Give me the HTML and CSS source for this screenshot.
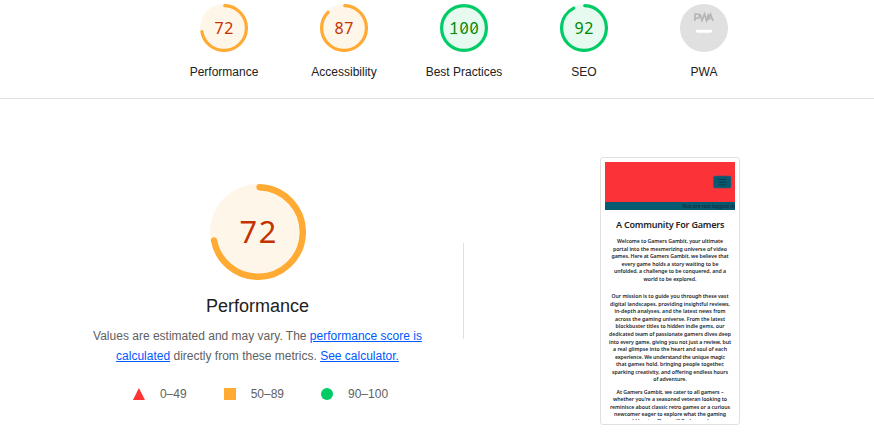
FILE: index.html
```
<!DOCTYPE html>
<html lang="en">
<head>
<meta charset="utf-8">
<title>Performance report</title>
<link rel="stylesheet" href="styles.css">
</head>
<body>
<header class="scores">
  <a class="score average"><svg class="gauge" viewBox="0 0 120 120"><circle class="base" cx="60" cy="60" r="60"/><circle class="arc" cx="60" cy="60" r="56" pathLength="360" stroke-dasharray="257 360" transform="rotate(-88 60 60)"/><text x="60" y="75.500" textLength="47">72</text></svg><span>Performance</span></a>
  <a class="score average"><svg class="gauge" viewBox="0 0 120 120"><circle class="base" cx="60" cy="60" r="60"/><circle class="arc" cx="60" cy="60" r="56" pathLength="360" stroke-dasharray="311 360" transform="rotate(-88 60 60)"/><text x="60" y="75.500" textLength="47">87</text></svg><span>Accessibility</span></a>
  <a class="score pass"><svg class="gauge" viewBox="0 0 120 120"><circle class="base" cx="60" cy="60" r="60"/><circle class="arc" cx="60" cy="60" r="56"/><text x="60" y="75.500" textLength="73">100</text><path class="strokes" d="M26 74H43M54 70L67 52M79 70L92 52"/></svg><span>Best Practices</span></a>
  <a class="score pass"><svg class="gauge" viewBox="0 0 120 120"><circle class="base" cx="60" cy="60" r="60"/><circle class="arc" cx="60" cy="60" r="56" pathLength="360" stroke-dasharray="329 360" transform="rotate(-88 60 60)"/><text x="60" y="75.500" textLength="47">92</text></svg><span>SEO</span></a>
  <a class="score"><svg class="gauge" viewBox="0 0 48 48"><circle cx="24" cy="24" r="24" fill="#e0e0e0"/><path d="M15 17V10H17.500Q19.500 10 19.500 12T17.500 14.300H15M20 10L22 16.500L24.500 10L26.500 16.500L28.500 10M27.500 16.500L30.500 10L33 17M28.800 14.500H32" fill="none" stroke="#b5b5b5" stroke-width="1.600"/><rect x="16" y="25.700" width="16" height="3" rx="1.400" fill="#fff"/></svg><span>PWA</span></a>
</header>
<main class="category">
  <section class="summary">
    <svg class="gauge large average" viewBox="0 0 120 120"><circle class="base" cx="60" cy="60" r="60"/><circle class="arc" cx="60" cy="60" r="56" pathLength="360" stroke-dasharray="257 360" transform="rotate(-88 60 60)"/><text x="60" y="74" textLength="46">72</text></svg>
    <h1>Performance</h1>
    <p class="description">Values are estimated and may vary. The <a>performance score is<br>calculated</a> directly from these metrics. <a>See calculator.</a></p>
    <div class="scale">
      <span class="range"><i class="triangle"></i>0–49</span>
      <span class="range"><i class="square"></i>50–89</span>
      <span class="range"><i class="circle"></i>90–100</span>
    </div>
  </section>
  <div class="divider"></div>
  <div class="preview">
    <svg class="shot" viewBox="605 162 130 258">
      <rect x="605" y="162" width="130" height="40" fill="#fb3338"/>
      <rect x="605" y="202" width="130" height="8" fill="#065b72"/>
      <rect x="713.500" y="176" width="17.500" height="12" rx="1.500" fill="#065b72" stroke="#4f5364" stroke-width=".6"/>
      <path d="M718.500 179.500h8M718.500 182.200h8M718.500 184.900h8" stroke="#123540" stroke-width=".8"/>
      <text class="login" x="682" y="207.800" textLength="53">You are not logged in</text>
      <text class="title" x="670.200" y="228" textLength="108.500">A Community For Gamers</text>
      <g class="copy">
        <text x="670" y="243" textLength="106">Welcome to Gamers Gambit, your ultimate</text>
        <text x="670" y="250.600" textLength="114">portal into the mesmerizing universe of video</text>
        <text x="670" y="258.200" textLength="117">games. Here at Gamers Gambit, we believe that</text>
        <text x="670" y="265.800" textLength="97">every game holds a story waiting to be</text>
        <text x="670" y="273.400" textLength="112">unfolded, a challenge to be conquered, and a</text>
        <text x="670" y="281" textLength="53">world to be explored.</text>
        <text x="670" y="298.200" textLength="117">Our mission is to guide you through these vast</text>
        <text x="670" y="305.700" textLength="120">digital landscapes, providing insightful reviews,</text>
        <text x="670" y="313.300" textLength="111">in-depth analyses, and the latest news from</text>
        <text x="670" y="320.800" textLength="110">across the gaming universe. From the latest</text>
        <text x="670" y="328.400" textLength="109">blockbuster titles to hidden indie gems, our</text>
        <text x="670" y="335.900" textLength="122">dedicated team of passionate gamers dives deep</text>
        <text x="670" y="343.500" textLength="122">into every game, giving you not just a review, but</text>
        <text x="670" y="351" textLength="114">a real glimpse into the heart and soul of each</text>
        <text x="670" y="358.600" textLength="110">experience. We understand the unique magic</text>
        <text x="670" y="366.100" textLength="108">that games hold, bringing people together,</text>
        <text x="670" y="373.700" textLength="116">sparking creativity, and offering endless hours</text>
        <text x="670" y="381.200" textLength="33.500">of adventure.</text>
        <text x="670" y="393.800" textLength="107">At Gamers Gambit, we cater to all gamers –</text>
        <text x="670" y="401.300" textLength="114">whether you’re a seasoned veteran looking to</text>
        <text x="670" y="408.900" textLength="120">reminisce about classic retro games or a curious</text>
        <text x="670" y="416.400" textLength="112">newcomer eager to explore what the gaming</text>
        <text x="670" y="423" textLength="94">world has to offer, you'll find your place</text>
      </g>
    </svg>
  </div>
</main>
</body>
</html>
```
FILE: styles.css
```
* { box-sizing: border-box; }
body { margin: 0; height: 445px; overflow: hidden; background: #fff; color: #212121; font: 12px/20px "Liberation Sans", Arial, sans-serif; }
.scores { height: 99px; padding: 4px 0 0 54px; border-bottom: 1px solid #e0e0e0; display: flex; justify-content: center; }
.score { width: 120px; display: flex; flex-direction: column; align-items: center; gap: 10px; white-space: nowrap; }
.gauge { display: block; width: 48px; height: 48px; }
.gauge text { font: 40px "Noto Sans", sans-serif; text-anchor: middle; }
.arc { fill: none; stroke-width: 8; stroke-linecap: round; }
.average .base { fill: #fff6ea; }
.average .arc { stroke: #fa3; }
.average text { fill: #c33300; }
.pass .base { fill: #e6faf0; }
.pass .arc { stroke: #0c6; }
.pass text { fill: #080; }
.strokes { fill: none; stroke: #080; stroke-width: 2.5; }
.category { display: flex; align-items: flex-start; }
.summary { width: 463px; padding: 85px 0 0 52px; display: flex; flex-direction: column; align-items: center; }
.gauge.large { width: 96px; height: 96px; }
.gauge.large text { font-size: 38.5px; }
h1 { margin: 14px 0 8px; font-size: 18px; line-height: 24px; font-weight: 400; }
.description { margin: 0; color: #616161; text-align: center; white-space: nowrap; }
.description a { color: #0059ff; text-decoration: underline; }
.scale { margin: 18px 0 0 6px; display: flex; gap: 37px; color: #616161; }
.range { display: flex; align-items: center; gap: 15px; }
.range i { width: 12px; height: 12px; }
.triangle { background: #f33; clip-path: polygon(50% 0, 100% 100%, 0 100%); }
.square { background: #fa3; }
.circle { background: #0c6; border-radius: 50%; }
.divider { width: 1px; height: 96px; margin-top: 144px; background: #e0e0e0; }
.preview { width: 140px; height: 268px; margin: 58px 0 0 136px; padding: 4px; border: 1px solid #e0e0e0; border-radius: 3px; }
.shot { display: block; width: 130px; height: 258px; font-family: "Noto Sans", sans-serif; font-weight: 600; fill: #212529; }
.title { font-size: 9px; text-anchor: middle; }
.copy { font-size: 5.2px; font-weight: 600; text-anchor: middle; }
.login { font-size: 5.2px; fill: #182f3a; }
```
